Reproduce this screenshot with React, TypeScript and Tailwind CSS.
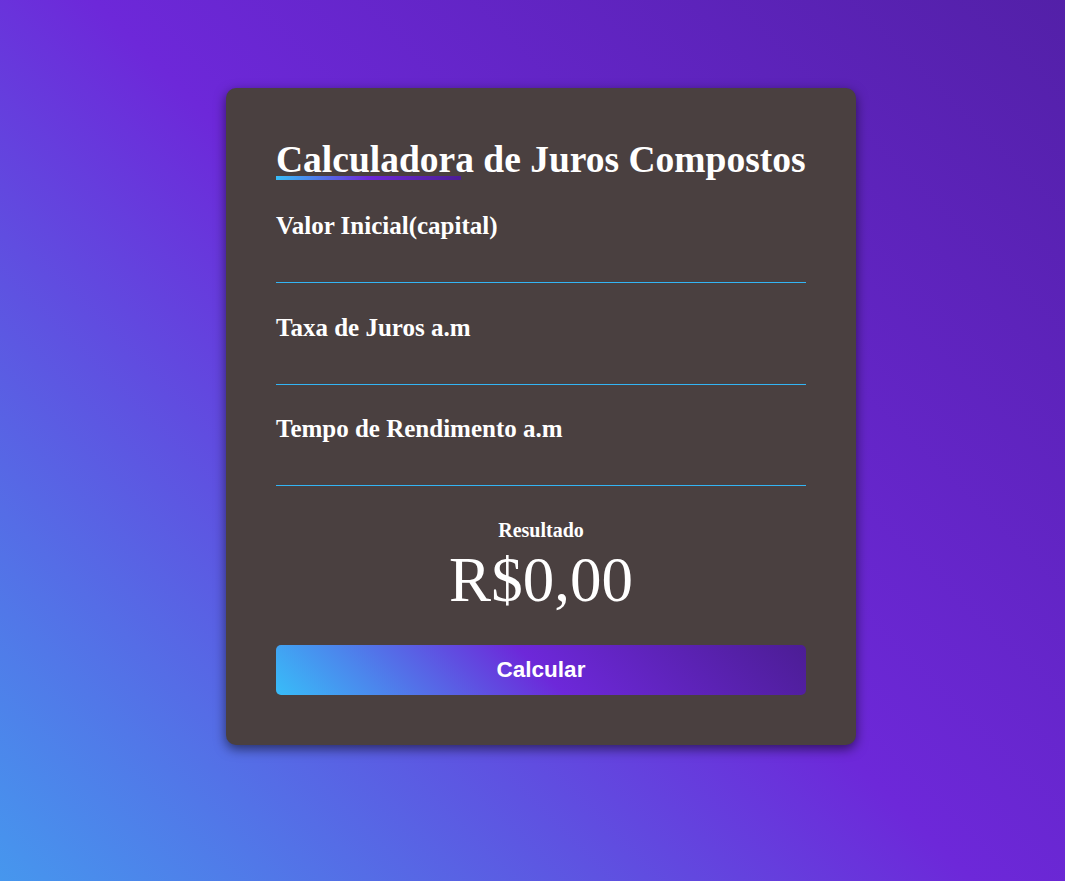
import React from "react";

const serif = { fontFamily: '"Liberation Serif", "Times New Roman", serif' };

function Field({ label, className = "" }: { label: string; className?: string }) {
  return (
    <div className={"flex flex-col " + className}>
      <label className="text-[25px] font-bold leading-[28px] text-white" style={serif}>
        {label}
      </label>
      <input
        type="text"
        className="h-[43px] w-full border-b border-[#33b5f5] bg-transparent text-white outline-none"
      />
    </div>
  );
}

export default function App() {
  return (
    <div className="min-h-screen w-full bg-[linear-gradient(45deg,#4697ee_0%,#6d28d9_50%,#5320a8_100%)] pl-[17px] pt-[88px]">
      <div className="mx-auto flex w-[630px] flex-col rounded-[10px] bg-[#4a4040] p-[50px] shadow-[0_4px_12px_rgba(0,0,0,0.55)]">
        <h1
          className="relative self-start text-[37.5px] font-bold leading-[43px] text-white"
          style={serif}
        >
          Calculadora de Juros Compostos
          <span className="absolute bottom-[1px] left-0 h-[4px] w-[35%] bg-[linear-gradient(90deg,#38bdf8,#6d28d9,#4c1d95)]" />
        </h1>
        <div className="mt-[31px] flex flex-col">
          <Field label="Valor Inicial(capital)" />
          <Field label="Taxa de Juros a.m" className="mt-[31px]" />
          <Field label="Tempo de Rendimento a.m" className="mt-[30px]" />
        </div>
        <div className="mt-[33px] flex flex-col items-center text-white" style={serif}>
          <span className="text-[20px] font-bold leading-[23px]">Resultado</span>
          <span className="mt-[2px] text-[63px] leading-[72px]">R$0,00</span>
        </div>
        <button
          className="mt-[29px] h-[50px] w-full rounded-[5px] bg-[linear-gradient(45deg,#38bdf8_0%,#6d28d9_50%,#4c1d95_100%)] text-[22.5px] font-bold text-white"
          style={{ fontFamily: '"Liberation Sans", Arial, sans-serif' }}
        >
          Calcular
        </button>
      </div>
    </div>
  );
}
